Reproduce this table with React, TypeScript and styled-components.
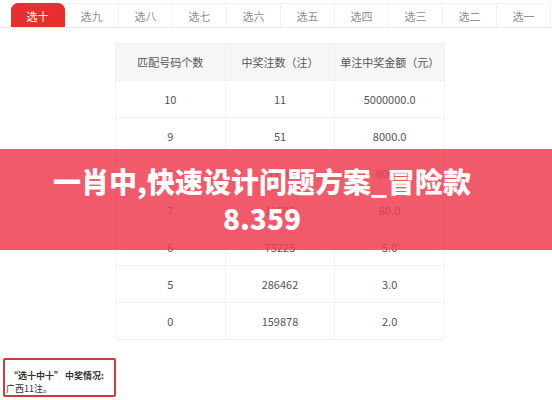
import styled, { createGlobalStyle } from "styled-components";

const GlobalStyle = createGlobalStyle`
  html, body {
    margin: 0;
    padding: 0;
    background: #ffffff;
  }
  body {
    font-family: "Noto Sans CJK SC", "Noto Sans", sans-serif;
  }
`;

const tabs = ["选十", "选九", "选八", "选七", "选六", "选五", "选四", "选三", "选二", "选一"];

const rows = [
  ["10", "11", "5000000.0"],
  ["9", "51", "8000.0"],
  ["8", "1176", "800.0"],
  ["7", "11803", "80.0"],
  ["6", "73225", "5.0"],
  ["5", "286462", "3.0"],
  ["0", "159878", "2.0"],
];

export default function App() {
  return (
    <Page>
      <GlobalStyle />
      <TabBar>
        {tabs.map((t, i) => (
          <Tab key={t} $active={i === 0}>
            {t}
          </Tab>
        ))}
      </TabBar>
      <Table>
        <thead>
          <tr>
            <Th>匹配号码个数</Th>
            <Th>中奖注数（注）</Th>
            <Th>单注中奖金额（元）</Th>
          </tr>
        </thead>
        <tbody>
          {rows.map((r) => (
            <tr key={r[0]}>
              {r.map((c, j) => (
                <Td key={j}>{c}</Td>
              ))}
            </tr>
          ))}
        </tbody>
      </Table>
      <NoteBox>
        <NoteTitle>“选十中十” 中奖情况:</NoteTitle>
        <NoteText>广西11注。</NoteText>
      </NoteBox>
      <Banner>
        <BannerTitle>
          一肖中,快速设计问题方案_冒险款
          <br />
          8.359
        </BannerTitle>
      </Banner>
    </Page>
  );
}

const Page = styled.div`
  position: relative;
  width: 552px;
  height: 400px;
  overflow: hidden;
  background: #ffffff;
`;

const TabBar = styled.div`
  display: flex;
  padding: 3px 0 0 11px;
  height: 24px;
  border-bottom: 1px solid #e9e9e9;
`;

const Tab = styled.div<{ $active?: boolean }>`
  width: 54px;
  height: 24px;
  flex: none;
  display: flex;
  align-items: center;
  justify-content: center;
  font-size: 11px;
  color: ${(p) => (p.$active ? "#ffffff" : "#8f8f8f")};
  background: ${(p) => (p.$active ? "#e6302d" : "#ffffff")};
  border-radius: ${(p) => (p.$active ? "7px 7px 0 0" : "0")};
  border-right: 1px solid ${(p) => (p.$active ? "#e6302d" : "#f0f0f0")};
  border-top: 1px solid ${(p) => (p.$active ? "#e6302d" : "#f3f3f3")};
  box-sizing: border-box;
`;

const Table = styled.table`
  margin: 15px 0 0 115px;
  width: 330px;
  border-collapse: collapse;
  table-layout: fixed;
`;

const Th = styled.th`
  height: 36px;
  padding: 0;
  background: #f6f6f6;
  font-size: 11px;
  font-weight: normal;
  color: #555555;
  border: 1px solid #f0f0f0;
  text-align: center;
`;

const Td = styled.td`
  height: 36px;
  padding: 0;
  font-size: 11px;
  color: #555555;
  border: 1px solid #f0f0f0;
  text-align: center;
`;

const NoteBox = styled.div`
  margin: 18px 0 0 3px;
  width: 113px;
  height: 39px;
  box-sizing: border-box;
  border: 2px solid #d23a3a;
  border-radius: 2px;
  padding: 9px 0 0 1px;
  font-size: 9px;
  line-height: 13px;
  color: #333333;
  white-space: nowrap;
`;

const NoteTitle = styled.div`
  font-weight: bold;
  padding-left: 3px;
`;

const NoteText = styled.div``;

const Banner = styled.div`
  position: absolute;
  left: 0;
  top: 149px;
  width: 552px;
  height: 101px;
  background: rgba(237, 61, 80, 0.85);
  display: flex;
  align-items: center;
  justify-content: center;
  box-sizing: border-box;
  padding: 0 28px 0 0;
`;

const BannerTitle = styled.div`
  color: #ffffff;
  font-size: 28px;
  font-weight: 900;
  line-height: 37px;
  text-align: center;
  white-space: nowrap;
`;
